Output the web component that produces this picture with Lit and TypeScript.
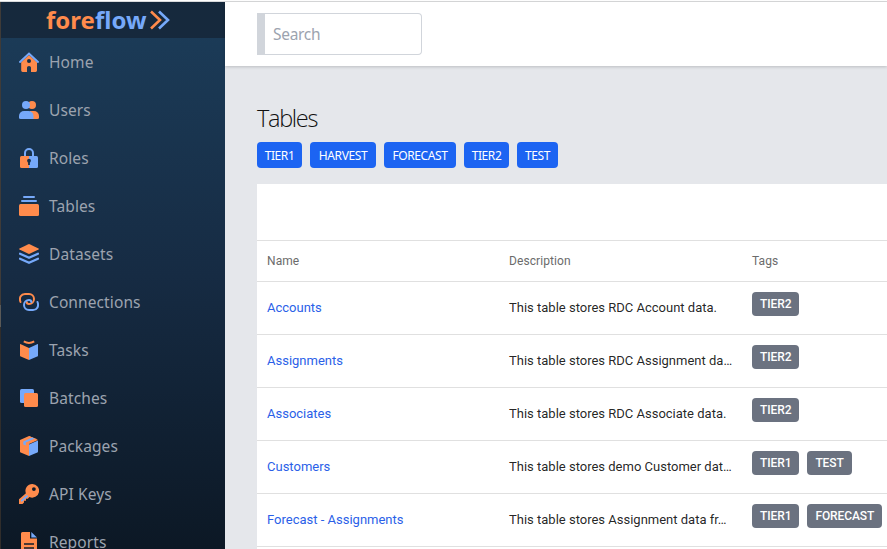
import { LitElement, html, css, svg } from "lit";
import { customElement } from "lit/decorators.js";

const O = "#ff8b4c";
const B = "#76a9fa";
const D = "#182f47";

const icons: Record<string, unknown> = {
  Home: svg`<path fill=${O} d="M10 3 2.2 10.2V18.6Q2.2 20 3.6 20H8V15.5Q8 14 10 14T12 15.5V20H16.6Q18 20 18 18.6V10.2Z"/><path fill="none" stroke=${B} stroke-width="2" stroke-linecap="round" d="M1 9.9 10 1.6 19 9.9"/><circle cx="10" cy="9" r="2" fill=${D}/>`,
  Users: svg`<circle cx="13" cy="5" r="4" fill=${O}/><path fill=${O} d="M11 11H15A5 5 0 0 1 20 16V17.5Q20 19 18.5 19H11Z"/><circle cx="7" cy="5" r="4" fill=${B}/><path fill=${B} d="M5 11H9.5A5 5 0 0 1 14.500 16V19H1.500Q0 19 0 17.500V16A5 5 0 0 1 5 11Z"/>`,
  Roles: svg`<path fill="none" stroke=${B} stroke-width="2" d="M6 9V5A4 4 0 0 1 14 5V9"/><path fill=${O} d="M10 8H2.500Q1 8 1 9.500V18.500Q1 20 2.500 20H10Z"/><path fill=${B} d="M10 8H17.500Q19 8 19 9.500V18.500Q19 20 17.500 20H10Z"/><circle cx="10" cy="12.700" r="1.900" fill=${D}/><path fill=${D} d="M9.100 13H10.900V17H9.100Z"/>`,
  Tables: svg`<path stroke=${B} stroke-width="2" stroke-linecap="round" d="M5 1H15M3 5H17"/><rect x="0" y="8" width="20" height="12" rx="1.500" fill=${O}/>`,
  Datasets: svg`<path fill=${O} d="M9.400.2Q10 0 10.600.2L19.500 4.500Q20.300 5 19.500 5.500L10.600 9.800Q10 10 9.400 9.800L.5 5.500Q-.3 5 .5 4.500Z"/><path fill="none" stroke=${B} stroke-width="2.300" stroke-linecap="round" stroke-linejoin="round" d="M1 9.700 10 13.800 19 9.700M1 14.700 10 18.800 19 14.700"/>`,
  Connections: svg`<path fill="none" stroke=${O} stroke-width="2" stroke-linecap="round" d="M1.500 10C-.2 5.600 2.200 2 6 2H10A5 5 0 0 1 10 12C8.400 12 7.700 11.200 7.700 10"/><path fill="none" stroke=${B} stroke-width="2" stroke-linecap="round" d="M18.500 10C20.200 14.400 17.800 18 14 18H10A5 5 0 0 1 10 8C11.600 8 12.300 8.800 12.300 10"/>`,
  Tasks: svg`<path fill="none" stroke=${O} stroke-width="2" d="M4.800 1.300Q10 4.600 15.200 1.300"/><path fill=${O} d="M1.300 4 10 8V20L1.800 16.600Q1 16.200 1 15.400V4.300Z"/><path fill=${B} d="M18.700 4 10 8V20L18.200 16.600Q19 16.200 19 15.400V4.300Z"/>`,
  Batches: svg`<rect x="1" y="1" width="14" height="14" rx="1.500" fill=${B}/><rect x="5" y="5" width="14" height="14" rx="1.500" fill=${O}/>`,
  Packages: svg`<path fill=${O} d="M10 0 18.300 3.300 10 7.300V20L1.700 16.600Q1 16.300 1 15.500V4Z"/><path fill=${O} d="M10 0 19 4 10 8Z"/><path fill=${B} d="M19 4.600 10 8.400V20L18.300 16.600Q19 16.300 19 15.500Z"/><path fill=${B} d="M13.200 1.500 15.800 2.600 6.800 6.600V9.600L4.300 8.500V5.500Z"/>`,
  "API Keys": svg`<path fill=${O} fill-rule="evenodd" d="M13.200 0A6.800 6.800 0 1 1 10.500 13L8.800 14.700H7V16.700H5V18.500L3.500 20H0V15.300L6.900 9.300A6.800 6.800 0 0 1 13.200 0ZM14.900 3.200A1.900 1.900 0 1 0 14.900 7A1.900 1.900 0 1 0 14.900 3.200Z"/><path stroke=${B} stroke-width="1.800" stroke-linecap="round" d="M2.800 16.700 8 12"/>`,
  Reports: svg`<path fill=${O} d="M3.500 0H11V6.500H18V20H2V1.500Q2 0 3.500 0Z"/><path fill=${B} d="M12.300 0 18 5.500H12.300Z"/><path stroke="#101e2d" stroke-width="1.500" d="M5 12H15M5 16H15"/>`,
};

const filters = [
  ["TIER1", 45],
  ["HARVEST", 66],
  ["FORECAST", 72],
  ["TIER2", 45],
  ["TEST", 41],
] as const;

const rows: [string, string, string[]][] = [
  ["Accounts", "This table stores RDC Account data.", ["TIER2"]],
  ["Assignments", "This table stores RDC Assignment da…", ["TIER2"]],
  ["Associates", "This table stores RDC Associate data.", ["TIER2"]],
  ["Customers", "This table stores demo Customer dat…", ["TIER1", "TEST"]],
  ["Forecast - Assignments", "This table stores Assignment data fr…", ["TIER1", "FORECAST"]],
];

@customElement("app-sidebar")
export class AppSidebar extends LitElement {
  static styles = css`
    :host { display: block; width: 225px; flex: none; box-sizing: border-box; border-left: 1px solid #3a3835;
      border-image: linear-gradient(#3f3b38 303px, #5a5957 303px 325px, #302d2b 325px) 1;
      overflow: hidden; background: linear-gradient(#1c3d5a, #162b43 50%, #0c1825);
      font-family: "Noto Sans", "Open Sans", sans-serif; }
    .brand { height: 36px; background: #16293d; display: flex; align-items: center; padding-left: 45px; }
    .word { font-size: 24px; line-height: 38px; font-weight: 700; letter-spacing: 0; color: #ff8b4c; }
    .word span { color: #76a9fa; }
    .chevrons { width: 20px; height: 20px; margin: 0 0 0 3px; }
    .item { height: 48px; display: flex; align-items: center; padding-left: 18px; gap: 10px;
      color: #9ca3af; font-size: 15.500px; letter-spacing: 0.1px; }
    .item svg { width: 20px; height: 20px; flex: none; }
  `;
  render() {
    return html`
      <div class="brand">
        <div class="word">fore<span>flow</span></div>
        <svg class="chevrons" viewBox="0 0 20 20" fill="none" stroke-width="2.600">
          <path stroke=${B} d="M9 1.500 18 10 9 18.500" />
          <path stroke=${O} d="M1 1.500 10 10 1 18.500" />
        </svg>
      </div>
      <nav>
        ${Object.entries(icons).map(
          ([name, art]) => html`<div class="item"><svg viewBox="0 0 20 20">${art}</svg><span>${name}</span></div>`
        )}
      </nav>
    `;
  }
}

@customElement("app-root")
export class AppRoot extends LitElement {
  static styles = css`
    :host { display: flex; flex-direction: column; height: 549px; overflow: hidden; background: #fff;
      font-family: "Noto Sans", "Open Sans", sans-serif; }
    .edge { height: 1px; flex: none; border-bottom: 1px solid #d9dadc; }
    .shell { display: flex; flex: 1; min-height: 0; }
    .main { flex: 1; min-width: 0; background: #e5e7eb; display: flex; flex-direction: column; }
    .top { height: 64px; flex: none; background: #fff; box-shadow: 0 1px 3px rgba(0, 0, 0, 0.18);
      padding: 11px 0 0 32px; box-sizing: border-box; }
    .search { width: 165px; height: 42px; box-sizing: border-box; border: 1px solid #d1d5db; border-left-width: 8px;
      border-radius: 0 4px 4px 0; padding: 0 8px; font: 15.500px "Noto Sans", sans-serif; letter-spacing: -0.3px;
      color: #111; outline: none; display: block; }
    .search::placeholder { color: #9ca3af; opacity: 1; }
    .page { padding: 34px 0 0 32px; }
    .title { margin: 0; font-family: "Open Sans", sans-serif; font-weight: 300; font-size: 23.500px; line-height: 36px; height: 42px;
      letter-spacing: -1.300px; color: #111; }
    .filters { display: flex; gap: 8px; height: 42px; }
    .filter { height: 26px; border-radius: 4px; background: #1c64f2; color: #fff; text-align: center;
      font-size: 12px; line-height: 27px; letter-spacing: -0.4px; }
    .card { background: #fff; font-family: Roboto, sans-serif; height: 400px; }
    .tools { height: 56px; }
    .row { display: grid; grid-template-columns: 242px 243px 1fr; height: 52px; padding-left: 10px;
      border-top: 1px solid #e0e0e0; font-size: 13px; line-height: 52px; color: rgba(0, 0, 0, 0.87); letter-spacing: 0; }
    .head { height: 40px; line-height: 40px; font-size: 12px; font-weight: 400; color: #6b6b6b; letter-spacing: 0.080px; }
    .link { color: #2b5fe8; letter-spacing: 0; }
    .desc { white-space: nowrap; }
    .tags { display: flex; gap: 8px; padding-top: 10px; }
    .tag { height: 24px; line-height: 24px; padding: 0 8px; border-radius: 4px; background: #6b7280; color: #fff;
      font-size: 12px; font-weight: 500; letter-spacing: -0.100px; }
  `;
  render() {
    return html`
      <div class="edge"></div>
      <div class="shell">
        <app-sidebar></app-sidebar>
        <div class="main">
          <div class="top"><input class="search" placeholder="Search" /></div>
          <div class="page">
            <h1 class="title">Tables</h1>
            <div class="filters">
              ${filters.map(([t, w]) => html`<div class="filter" style="width:${w}px">${t}</div>`)}
            </div>
            <div class="card">
              <div class="tools"></div>
              <div class="row head"><div>Name</div><div>Description</div><div>Tags</div></div>
              ${rows.map(
                ([n, d, tags]) => html`<div class="row">
                  <div class="link">${n}</div>
                  <div class="desc">${d}</div>
                  <div class="tags">${tags.map((t) => html`<div class="tag">${t}</div>`)}</div>
                </div>`
              )}
              <div class="row"></div>
            </div>
          </div>
        </div>
      </div>
    `;
  }
}
